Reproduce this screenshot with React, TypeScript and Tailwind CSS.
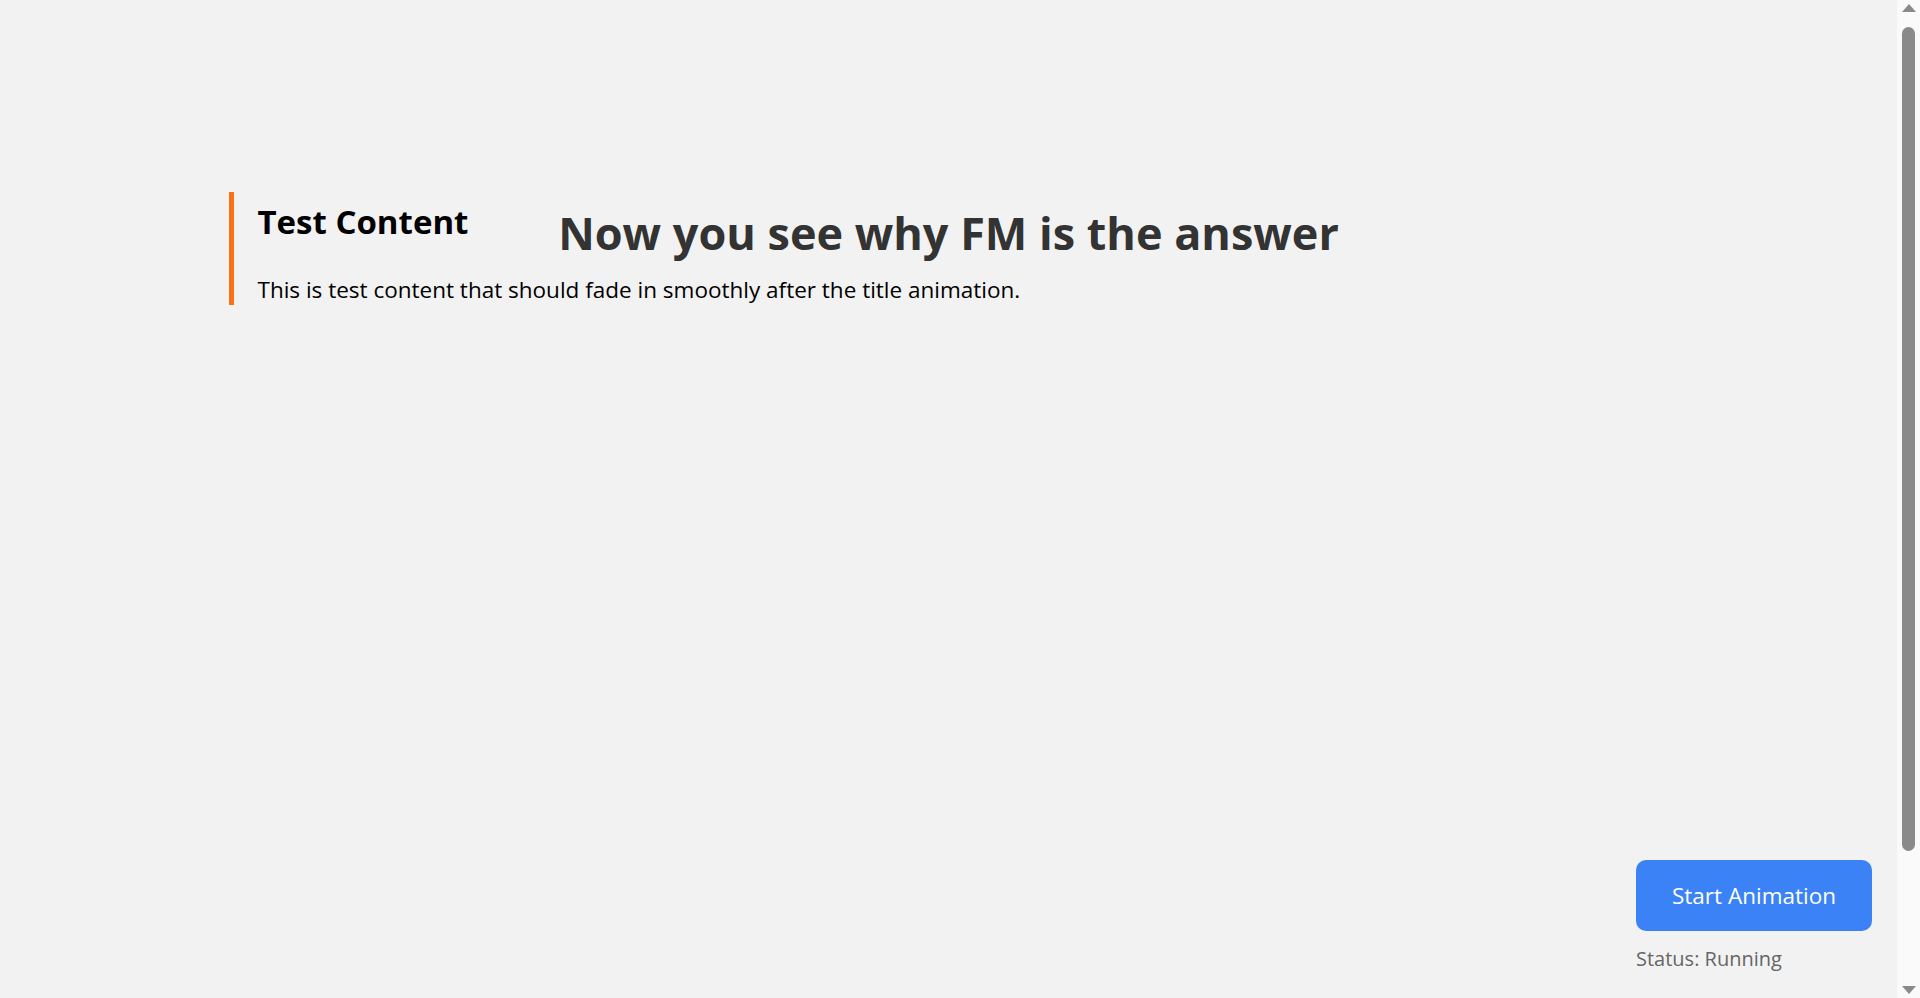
export default function App() {
  return (
    <div
      className="flex h-screen overflow-hidden bg-[#f2f2f2] text-black"
      style={{ fontFamily: '"Segoe UI", "Open Sans", "Noto Sans", sans-serif' }}
    >
      <main className="relative flex-1">
        <div className="mx-auto max-w-[1440px] pt-[192px]">
          <div className="border-l-[5px] border-[#f97316] pl-6 pt-[8px]">
            <h3 className="text-[33px] font-bold leading-[44px]">Test Content</h3>
            <p className="mt-[31px] text-[22.5px] leading-[30px]">
              This is test content that should fade in smoothly after the title animation.
            </p>
          </div>
        </div>

        {/* title overlay, mid animation */}
        <h1 className="absolute left-0 right-0 top-[203px] text-center text-[45px] font-bold leading-[60px] text-[#333]">
          Now you see why FM is the answer
        </h1>

        <div className="absolute bottom-[25px] right-[25px] flex flex-col items-start">
          <button
            type="button"
            className="flex h-[71px] w-[236px] items-center justify-center rounded-[10px] bg-[#3b82f6] text-[22.5px] text-white"
          >
            Start Animation
          </button>
          <p className="mt-[14px] text-[20px] leading-[28px] text-[#666]">Status: Running</p>
        </div>
      </main>

      {/* browser scrollbar */}
      <div className="flex w-[23px] flex-col items-center bg-[#fafafa] py-[4px]">
        <svg width="14" height="8" viewBox="0 0 14 8">
          <path d="M7 0 L14 8 L0 8 Z" fill="#8a8a8a" />
        </svg>
        <div className="mt-[15px] h-[824px] w-[13px] rounded-full bg-[#8a8a8a]" />
        <div className="flex-1" />
        <svg width="14" height="8" viewBox="0 0 14 8">
          <path d="M0 0 L14 0 L7 8 Z" fill="#8a8a8a" />
        </svg>
      </div>
    </div>
  );
}
